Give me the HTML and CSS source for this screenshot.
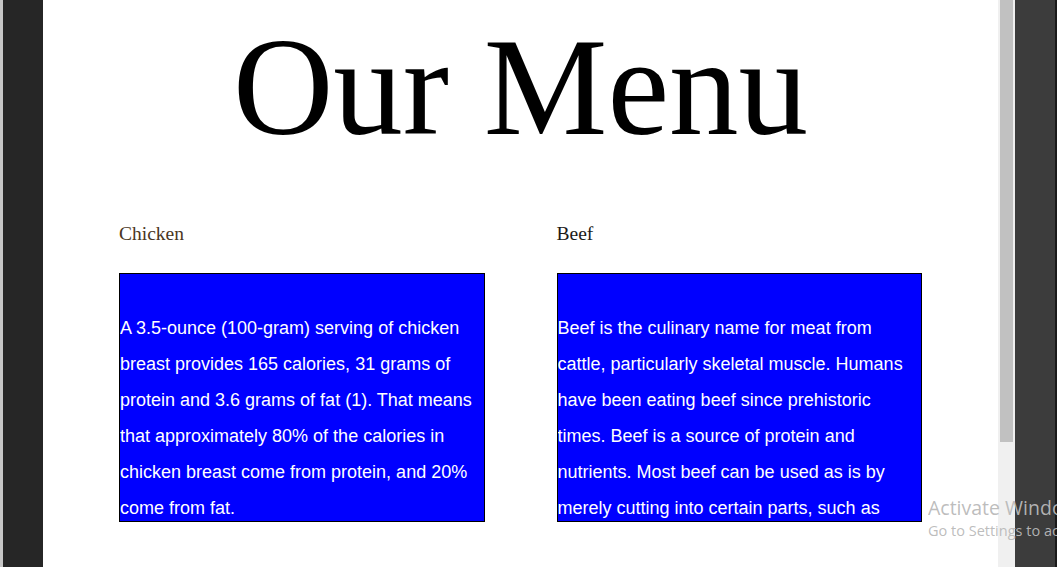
FILE: index.html
```html
<!DOCTYPE html>
<html lang="en">
<head>
<meta charset="utf-8">
<title>Our Menu</title>
<link rel="stylesheet" href="styles.css">
</head>
<body>
<div class="desktop">
  <div class="edge-left"></div>
  <div class="frame-left"></div>
  <main class="page">
    <h1 class="title">Our Menu</h1>
    <section class="menu">
      <article class="item">
        <h2 class="item-name chicken">Chicken</h2>
        <div class="item-box">
          <p class="item-text">A 3.5-ounce (100-gram) serving of chicken breast provides 165 calories, 31 grams of protein and 3.6 grams of fat (1). That means that approximately 80% of the calories in chicken breast come from protein, and 20% come from fat.</p>
        </div>
      </article>
      <article class="item">
        <h2 class="item-name beef">Beef</h2>
        <div class="item-box">
          <p class="item-text">Beef is the culinary name for meat from cattle, particularly skeletal muscle. Humans have been eating beef since prehistoric times. Beef is a source of protein and nutrients. Most beef can be used as is by merely cutting into certain parts, such as roasts, short ribs or steak.</p>
        </div>
      </article>
    </section>
  </main>
  <div class="scrollbar"><div class="thumb"></div></div>
  <div class="frame-right"></div>
  <div class="frame-right-edge"></div>
  <div class="frame-right-gap"></div>
  <div class="watermark">
    <div class="wm-title">Activate Windows</div>
    <div class="wm-sub">Go to Settings to activate Windows.</div>
  </div>
</div>
</body>
</html>
```

FILE: styles.css
```css
html, body {
  margin: 0;
  padding: 0;
  height: 100%;
  overflow: hidden;
  background: #ffffff;
}

.desktop {
  position: relative;
  display: flex;
  height: 567px;
  width: 1063px;
  overflow: hidden;
}

.edge-left {
  width: 3px;
  background: #c6c6c6;
  flex: none;
}

.frame-left {
  width: 40px;
  background: #262626;
  flex: none;
}

.page {
  width: 955px;
  flex: none;
  box-sizing: border-box;
  padding: 19px 76px 0;
  background: #ffffff;
  overflow: hidden;
}

.title {
  margin: 0;
  font-family: "Liberation Serif", "Times New Roman", serif;
  font-weight: normal;
  font-size: 139px;
  line-height: 137px;
  text-align: center;
  color: #000;
}

.menu {
  display: grid;
  grid-template-columns: 1fr 1fr;
  column-gap: 72px;
  margin-top: 66px;
}

.item-name {
  margin: 0;
  font-family: "Liberation Serif", "Times New Roman", serif;
  font-weight: normal;
  font-size: 19.5px;
  line-height: 24px;
}

.chicken { color: #4a3622; }
.beef { color: #1c1a18; }

.item-box {
  margin-top: 27px;
  height: 247px;
  border: 1px solid #000;
  background: #0000ff;
  overflow: hidden;
}

.item-text {
  margin: 36px 0 0;
  font-family: "Liberation Sans", Arial, sans-serif;
  font-size: 18px;
  line-height: 36px;
  color: #ffffff;
}

.scrollbar {
  width: 17px;
  flex: none;
  background: #f0f0f0;
  box-sizing: border-box;
  padding: 0 2px;
}

.thumb {
  height: 442px;
  background: #c1c1c1;
}

.frame-right {
  width: 40px;
  flex: none;
  background: #3c3c3c;
}

.frame-right-edge {
  width: 2px;
  flex: none;
  background: #1a1a1a;
}

.frame-right-gap {
  flex: 1;
  background: #ffffff;
}

.watermark {
  position: absolute;
  left: 928px;
  top: 496px;
  width: 129px;
  overflow: hidden;
  white-space: nowrap;
  font-family: "Open Sans", "Noto Sans", sans-serif;
  color: rgba(185, 185, 185, 0.95);
}

.wm-title {
  font-size: 19.5px;
  line-height: 24px;
}

.wm-sub {
  font-size: 14.5px;
  line-height: 22px;
}
```
